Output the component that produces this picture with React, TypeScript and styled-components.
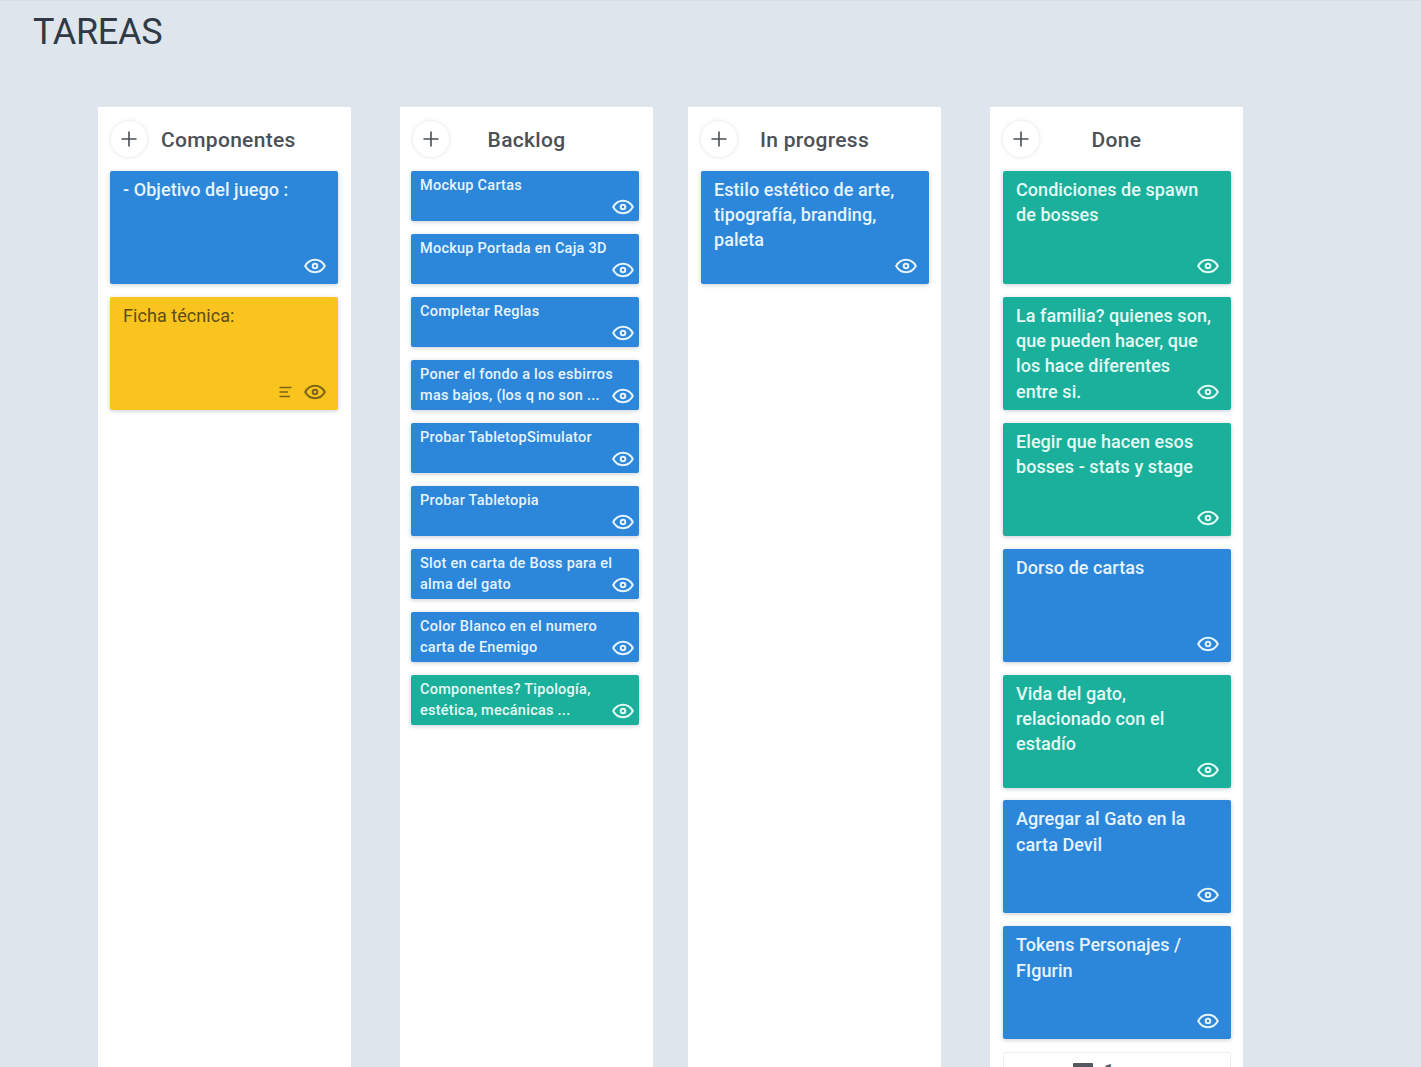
import React from "react"
import styled, { createGlobalStyle } from "styled-components"

const GlobalStyle = createGlobalStyle`
  html, body {
    margin: 0;
    padding: 0;
    height: 100%;
    overflow: hidden;
    background: #dfe5ec;
    font-family: Roboto, "Liberation Sans", sans-serif;
  }
`

const Page = styled.div`
  height: 1067px;
  overflow: hidden;
  box-sizing: border-box;
  border-top: 1px solid #d8dee6;
  background: #dfe5ec;
`

const Title = styled.h1`
  margin: 0;
  padding: 10px 0 0 33px;
  height: 96px;
  box-sizing: border-box;
  font-size: 36px;
  line-height: 42px;
  font-weight: 400;
  letter-spacing: -0.3px;
  color: #2f3a46;
`

const Board = styled.div`
  display: flex;
  align-items: stretch;
  padding-left: 98px;
  padding-top: 10px;
  height: 1000px;
`

const Column = styled.section<{ $after: number }>`
  width: 253px;
  flex: none;
  margin-right: ${p => p.$after}px;
  padding: 0 12px;
  box-sizing: border-box;
  background: #fff;
`

const ColumnHead = styled.header`
  display: grid;
  grid-template-columns: 38px 1fr 38px;
  column-gap: 13px;
  align-items: center;
  height: 64px;
`

const AddButton = styled.button`
  width: 38px;
  height: 38px;
  padding: 0;
  display: flex;
  align-items: center;
  justify-content: center;
  border-radius: 50%;
  border: 1px solid #f3f3f3;
  background: #fff;
  box-shadow: 0 0 4px rgba(0, 0, 0, 0.07);
  color: #4a4f55;
`

const ColumnTitle = styled.h2`
  margin: 2px 0 0;
  font-size: 21px;
  line-height: 26px;
  font-weight: 500;
  letter-spacing: 0.3px;
  white-space: nowrap;
  text-align: center;
  color: #4b5057;
`

const CardList = styled.div<{ $gap: number; $shift: number }>`
  display: flex;
  flex-direction: column;
  width: 228px;
  margin-left: ${p => p.$shift}px;
  gap: ${p => p.$gap}px;
`

const colors = {
  blue: { bg: "#2c86da", fg: "#e6f4ff", weight: 500, icon: 1 },
  green: { bg: "#1ab09c", fg: "#e4faf5", weight: 500, icon: 1 },
  yellow: { bg: "#f9c41e", fg: "#5e4c16", weight: 400, icon: 0.8 },
}

type Tone = keyof typeof colors

const Card = styled.article<{ $tone: Tone; $small?: boolean }>`
  position: relative;
  box-sizing: border-box;
  height: ${p => (p.$small ? 50 : 113)}px;
  padding: ${p => (p.$small ? "4px 9px" : "6px 16px 6px 13px")};
  border-radius: 2px;
  background: ${p => colors[p.$tone].bg};
  color: ${p => colors[p.$tone].fg};
  box-shadow: 0 1px 4px rgba(30, 60, 90, 0.25);
  font-size: ${p => (p.$small ? 14.5 : 18)}px;
  line-height: ${p => (p.$small ? 21 : 25.2)}px;
  letter-spacing: ${p => (p.$small ? 0.25 : 0.06)}px;
  font-weight: ${p => colors[p.$tone].weight};
`

const CardIcons = styled.div<{ $small?: boolean; $tone: Tone }>`
  position: absolute;
  right: ${p => (p.$small ? 5 : 12)}px;
  bottom: ${p => (p.$small ? 6 : 10)}px;
  display: flex;
  align-items: center;
  gap: 12px;
  opacity: ${p => colors[p.$tone].icon};
`

const PartialCard = styled.div`
  height: 60px;
  box-sizing: border-box;
  border: 1px solid #eceff2;
  border-radius: 2px;
  padding: 10px 0 0 69px;
  display: flex;
  gap: 11px;
  color: #55595f;
  font-size: 18px;
  line-height: 16px;
  font-weight: 500;
`

const Eye = () => (
  <svg width="22" height="16" viewBox="0 0 22 16" fill="none" stroke="currentColor" strokeWidth="2">
    <path d="M1.2 8C3.4 3.9 6.9 1.8 11 1.8S18.6 3.9 20.8 8C18.6 12.1 15.100 14.200 11 14.200S3.4 12.100 1.200 8Z" />
    <circle cx="11" cy="8" r="2.300" />
  </svg>
)

const Lines = () => (
  <svg width="13" height="12" viewBox="0 0 13 12" fill="none" stroke="currentColor" strokeWidth="1.500">
    <path d="M0.500 1.500H12.500M0.500 6H9M0.500 10.500H11" />
  </svg>
)

const Plus = () => (
  <svg width="16" height="16" viewBox="0 0 16 16" fill="none" stroke="currentColor" strokeWidth="1.600">
    <path d="M8 0.500V15.500M0.500 8H15.500" />
  </svg>
)

const ImageGlyph = () => (
  <svg width="20" height="16" viewBox="0 0 20 16" fill="#55595f">
    <rect width="20" height="16" rx="1" />
  </svg>
)

type Item = { text: React.ReactNode; tone: Tone; notes?: boolean }

const backlog: Item[] = [
  { text: "Mockup Cartas", tone: "blue" },
  { text: "Mockup Portada en Caja 3D", tone: "blue" },
  { text: "Completar Reglas", tone: "blue" },
  { text: "Poner el fondo a los esbirros mas bajos, (los q no son ...", tone: "blue" },
  { text: "Probar TabletopSimulator", tone: "blue" },
  { text: "Probar Tabletopia", tone: "blue" },
  { text: "Slot en carta de Boss para el alma del gato", tone: "blue" },
  { text: "Color Blanco en el numero carta de Enemigo", tone: "blue" },
  { text: "Componentes? Tipología, estética, mecánicas ...", tone: "green" },
]

const done: Item[] = [
  { text: "Condiciones de spawn de bosses", tone: "green" },
  { text: "La familia? quienes son, que pueden hacer, que los hace diferentes entre si.", tone: "green" },
  { text: "Elegir que hacen esos bosses - stats y stage", tone: "green" },
  { text: "Dorso de cartas", tone: "blue" },
  { text: "Vida del gato, relacionado con el estadío", tone: "green" },
  { text: "Agregar al Gato en la carta Devil", tone: "blue" },
  { text: "Tokens Personajes / FIgurin", tone: "blue" },
]

const columns: {
  title: string
  after: number
  shift: number
  gap: number
  small?: boolean
  items: Item[]
  partial?: boolean
}[] = [
  {
    title: "Componentes",
    after: 49,
    shift: 0,
    gap: 13,
    items: [
      { text: "- Objetivo del juego :", tone: "blue" },
      { text: "Ficha técnica:", tone: "yellow", notes: true },
    ],
  },
  { title: "Backlog", after: 35, shift: -1, gap: 13, small: true, items: backlog },
  {
    title: "In progress",
    after: 49,
    shift: 1,
    gap: 13,
    items: [{ text: "Estilo estético de arte, tipografía, branding, paleta", tone: "blue" }],
  },
  { title: "Done", after: 0, shift: 1, gap: 12.9, items: done, partial: true },
]

export default function App() {
  return (
    <Page>
      <GlobalStyle />
      <Title>TAREAS</Title>
      <Board>
        {columns.map(col => (
          <Column key={col.title} $after={col.after}>
            <ColumnHead>
              <AddButton aria-label="Añadir">
                <Plus />
              </AddButton>
              <ColumnTitle>{col.title}</ColumnTitle>
            </ColumnHead>
            <CardList $gap={col.gap} $shift={col.shift}>
              {col.items.map((item, i) => (
                <Card key={i} $tone={item.tone} $small={col.small}>
                  {item.text}
                  <CardIcons $small={col.small} $tone={item.tone}>
                    {item.notes && <Lines />}
                    <Eye />
                  </CardIcons>
                </Card>
              ))}
              {col.partial && (
                <PartialCard>
                  <ImageGlyph />
                  <span>1</span>
                </PartialCard>
              )}
            </CardList>
          </Column>
        ))}
      </Board>
    </Page>
  )
}
